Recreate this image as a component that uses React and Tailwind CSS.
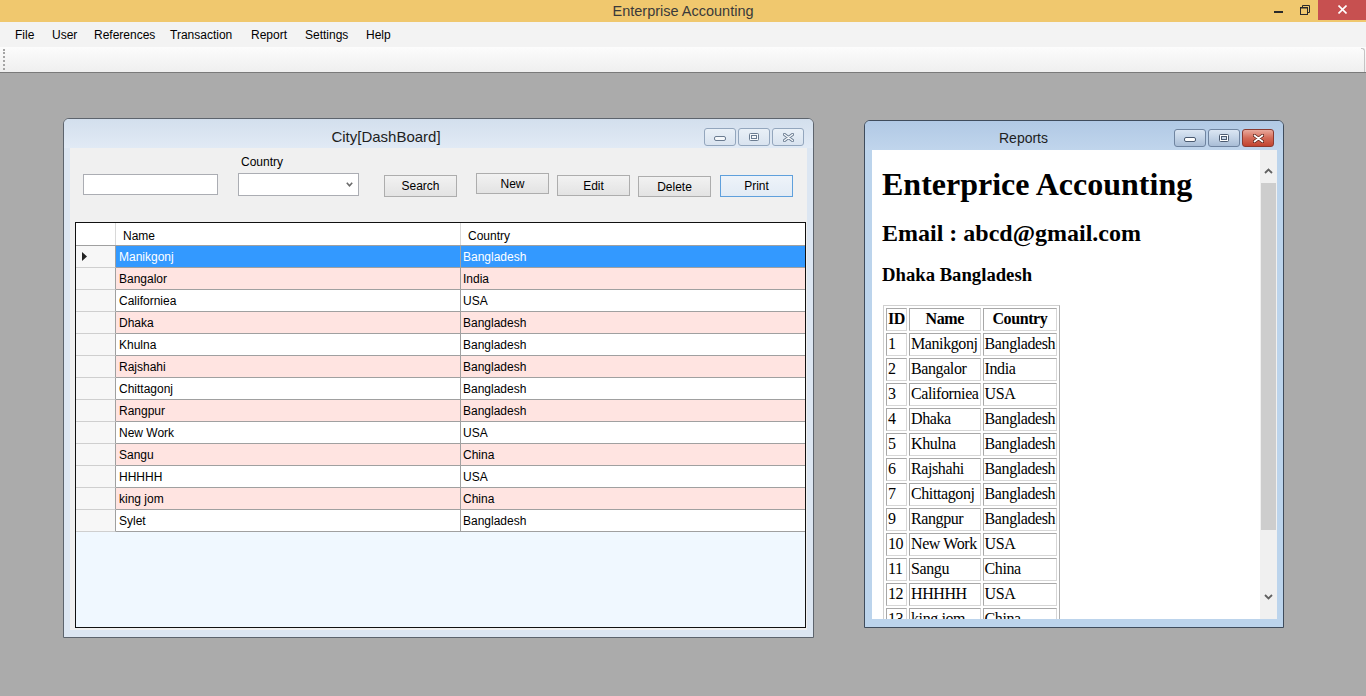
import React from "react";

const rows = [
  ["Manikgonj", "Bangladesh"],
  ["Bangalor", "India"],
  ["Californiea", "USA"],
  ["Dhaka", "Bangladesh"],
  ["Khulna", "Bangladesh"],
  ["Rajshahi", "Bangladesh"],
  ["Chittagonj", "Bangladesh"],
  ["Rangpur", "Bangladesh"],
  ["New Work", "USA"],
  ["Sangu", "China"],
  ["HHHHH", "USA"],
  ["king jom", "China"],
  ["Sylet", "Bangladesh"],
];

const report = [
  ["1", "Manikgonj", "Bangladesh"],
  ["2", "Bangalor", "India"],
  ["3", "Californiea", "USA"],
  ["4", "Dhaka", "Bangladesh"],
  ["5", "Khulna", "Bangladesh"],
  ["6", "Rajshahi", "Bangladesh"],
  ["7", "Chittagonj", "Bangladesh"],
  ["9", "Rangpur", "Bangladesh"],
  ["10", "New Work", "USA"],
  ["11", "Sangu", "China"],
  ["12", "HHHHH", "USA"],
  ["13", "king jom", "China"],
];

function InactiveBtns() {
  const b =
    "w-[32px] h-[18px] rounded-[3px] border border-[#93a6bd] bg-linear-to-b from-[#e9f0f7] to-[#d9e3ef] flex items-center justify-center";
  return (
    <div className="flex gap-[2px] mt-[9px] mr-[9px]">
      <div className={b + " pt-[3px]"}>
        <svg width="12" height="5">
          <rect x="0.5" y="0.5" width="11" height="4" rx="1.5" fill="#f5f8fb" stroke="#6b7c91" />
        </svg>
      </div>
      <div className={b}>
        <svg width="10" height="8">
          <rect x="0.5" y="0.5" width="9" height="7" rx="1" fill="#f5f8fb" stroke="#6b7c91" />
          <rect x="2.5" y="2.5" width="5" height="3" fill="none" stroke="#6b7c91" />
        </svg>
      </div>
      <div className={b}>
        <svg width="11" height="9">
          <path d="M1.5 1.5 L9.5 7.5 M9.5 1.5 L1.5 7.5" stroke="#6b7c91" strokeWidth="3.2" strokeLinecap="round" />
          <path d="M1.5 1.5 L9.5 7.5 M9.5 1.5 L1.5 7.5" stroke="#f5f8fb" strokeWidth="1.4" strokeLinecap="round" />
        </svg>
      </div>
    </div>
  );
}

function ActiveBtns() {
  const b =
    "w-[32px] h-[18px] rounded-[3px] border border-[#6f84a0] bg-linear-to-b from-[#dbe6f3] via-[#c3d3e6] to-[#a9bdd6] flex items-center justify-center";
  return (
    <div className="flex gap-[2px] mt-[8px] mr-[9px]">
      <div className={b + " pt-[3px]"}>
        <svg width="12" height="5">
          <rect x="0.5" y="0.5" width="11" height="4" rx="1.5" fill="#ffffff" stroke="#4a5a70" />
        </svg>
      </div>
      <div className={b}>
        <svg width="10" height="8">
          <rect x="0.5" y="0.5" width="9" height="7" rx="1" fill="#ffffff" stroke="#4a5a70" />
          <rect x="2.5" y="2.5" width="5" height="3" fill="#c7d5e6" stroke="#4a5a70" />
        </svg>
      </div>
      <div className="w-[32px] h-[18px] rounded-[3px] border border-[#8b3a30] bg-linear-to-b from-[#e9a99c] via-[#d36a57] to-[#c2432f] flex items-center justify-center">
        <svg width="11" height="9">
          <path d="M1.5 1.5 L9.5 7.5 M9.5 1.5 L1.5 7.5" stroke="#5a2219" strokeWidth="3.4" strokeLinecap="round" />
          <path d="M1.5 1.5 L9.5 7.5 M9.5 1.5 L1.5 7.5" stroke="#ffffff" strokeWidth="1.7" strokeLinecap="round" />
        </svg>
      </div>
    </div>
  );
}

const btn =
  "w-[73px] border border-[#adadad] bg-linear-to-b from-[#f2f2f2] to-[#e3e3e3] flex items-center justify-center text-[12px] text-black";

function CityWindow() {
  return (
    <div className="absolute left-[63px] top-[45px] w-[751px] h-[520px] border border-[#5d646d] rounded-t-[6px] bg-[#dce6f2] flex flex-col overflow-hidden">
      <div className="h-[29px] shrink-0 flex items-start bg-linear-to-b from-[#d3dfed] to-[#e1eaf5]">
        <div className="flex-1 text-center pt-[8px] pl-[4px] leading-[20px] text-[15px] text-[#1e1e1e]">City[DashBoard]</div>
        <InactiveBtns />
      </div>
      <div className="ml-[6px] w-[737px] h-[482px] shrink-0 bg-[#f0f0f0] flex flex-col">
        <div className="h-[74px] shrink-0 flex items-start">
          <div className="ml-[13px] mt-[26px] w-[135px] h-[21px] bg-white border border-[#abadb3]" />
          <div className="ml-[20px] mt-[7px] flex flex-col">
            <div className="h-[15px] leading-[15px] pl-[3px] text-[12px]">Country</div>
            <div className="mt-[3px] w-[121px] h-[23px] bg-white border border-[#abadb3] flex items-center justify-end pr-[5px]">
              <svg width="7" height="5">
                <path d="M0.8 0.8 L3.5 3.8 L6.2 0.8" fill="none" stroke="#6a6a6a" strokeWidth="1.6" />
              </svg>
            </div>
          </div>
          <div className={btn + " ml-[25px] mt-[27px] h-[22px]"}>Search</div>
          <div className={btn + " ml-[19px] mt-[25px] h-[21px]"}>New</div>
          <div className={btn + " ml-[8px] mt-[27px] h-[21px]"}>Edit</div>
          <div className={btn + " ml-[8px] mt-[28px] h-[21px]"}>Delete</div>
          <div className="ml-[9px] mt-[27px] h-[22px] w-[73px] border border-[#5fa0dc] bg-linear-to-b from-[#eef3f9] to-[#e2ebf5] flex items-center justify-center text-[12px]">
            Print
          </div>
        </div>
        <div className="ml-[5px] w-[731px] h-[406px] border border-[#111] bg-[#f0f8ff] overflow-hidden flex flex-col">
          <div className="h-[23px] shrink-0 flex bg-white border-b border-[#a0a0a0]">
            <div className="w-[40px] border-r border-[#d8d8d8]" />
            <div className="w-[345px] border-r border-[#d8d8d8] pl-[7px] pt-[2px] leading-[22px]">Name</div>
            <div className="flex-1 pl-[7px] pt-[2px] leading-[22px]">Country</div>
          </div>
          {rows.map(([n, c], i) => {
            const sel = i === 0;
            const bg = sel ? "bg-[#3399ff] text-white" : i % 2 === 1 ? "bg-[#ffe4e1]" : "bg-white";
            return (
              <div key={i} className="h-[22px] shrink-0 flex">
                <div className="w-[40px] border-r border-b border-r-[#a0a0a0] border-b-[#cfcfcf] bg-[#f7f7f7] flex items-center pl-[6px]">
                  {sel && (
                    <svg width="5" height="9">
                      <path d="M0 0 L5 4.5 L0 9 Z" fill="#222" />
                    </svg>
                  )}
                </div>
                <div className={"w-[345px] border-r border-b border-[#a0a0a0] pl-[3px] leading-[22px] " + bg}>{n}</div>
                <div className={"flex-1 border-b border-[#a0a0a0] pl-[2px] leading-[22px] " + bg}>{c}</div>
              </div>
            );
          })}
        </div>
      </div>
    </div>
  );
}

function ReportWindow() {
  const td = "border border-[#a8a8a8] border-r-[#d6d6d6] border-b-[#d6d6d6] px-[1px] h-[23px] text-left align-middle whitespace-nowrap";
  const th = "border border-[#a8a8a8] border-r-[#d6d6d6] border-b-[#d6d6d6] px-[1px] h-[23px] text-center align-middle font-bold whitespace-nowrap";
  return (
    <div className="absolute left-[864px] top-[47px] w-[420px] h-[508px] border border-[#3f4c5c] rounded-t-[6px] bg-[#bcd4ec] flex flex-col overflow-hidden">
      <div className="h-[29px] shrink-0 flex items-start bg-linear-to-b from-[#b1c9e5] to-[#c0d5ec]">
        <div className="flex-1 text-center pt-[7px] pl-[8px] leading-[20px] text-[14px] text-[#1e1e1e]">Reports</div>
        <ActiveBtns />
      </div>
      <div className="ml-[7px] w-[405px] h-[469px] shrink-0 flex">
        <div className="flex-1 bg-white overflow-hidden pl-[10px] font-['Liberation_Serif','Times_New_Roman',serif] text-black">
          <h1 className="mt-[16px] text-[32px] leading-[37px] font-bold whitespace-nowrap">Enterprice Accounting</h1>
          <h2 className="mt-[16px] text-[24px] leading-[28px] font-bold whitespace-nowrap">Email : abcd@gmail.com</h2>
          <h3 className="mt-[17px] text-[18.7px] leading-[21.5px] font-bold whitespace-nowrap">Dhaka Bangladesh</h3>
          <table className="mt-[19px] ml-[1px] border-separate border-spacing-[2px] border border-[#b0b0b0] border-t-[#d0d0d0] border-l-[#d0d0d0] text-[16px] leading-[18px] tracking-[-0.4px]">
            <thead>
              <tr>
                <th className={th}>ID</th>
                <th className={th}>Name</th>
                <th className={th}>Country</th>
              </tr>
            </thead>
            <tbody>
              {report.map(([id, n, c]) => (
                <tr key={id}>
                  <td className={td}>{id}</td>
                  <td className={td}>{n}</td>
                  <td className={td}>{c}</td>
                </tr>
              ))}
            </tbody>
          </table>
        </div>
        <div className="w-[17px] shrink-0 bg-[#f0f0f0] flex flex-col">
          <div className="h-[33px] shrink-0 flex justify-center pt-[18px]">
            <svg width="9" height="6">
              <path d="M1 5 L4.5 1.5 L8 5" fill="none" stroke="#606060" strokeWidth="1.8" />
            </svg>
          </div>
          <div className="h-[347px] shrink-0 mx-[1px] bg-[#cdcdcd]" />
          <div className="flex-1" />
          <div className="h-[33px] shrink-0 flex justify-center pt-[8px]">
            <svg width="9" height="6">
              <path d="M1 1 L4.5 4.5 L8 1" fill="none" stroke="#606060" strokeWidth="1.8" />
            </svg>
          </div>
        </div>
      </div>
    </div>
  );
}

export default function App() {
  return (
    <div className="w-[1366px] h-[696px] flex flex-col overflow-hidden font-['Liberation_Sans',Arial,sans-serif] text-[12px] text-black">
      <div className="h-[22px] shrink-0 bg-[#f0c86e] grid grid-cols-[1fr_auto_1fr]">
        <div />
        <div className="leading-[22px] text-[14.5px] text-[#3a3a3a]">Enterprise Accounting</div>
        <div className="flex justify-end items-start">
          <div className="w-[26px] h-[20px] flex justify-center pt-[11px]">
            <svg width="9" height="2">
              <rect width="9" height="2" fill="#2a2a2a" />
            </svg>
          </div>
          <div className="w-[27px] h-[20px] flex justify-center pt-[5px]">
            <svg width="10" height="10">
              <rect x="0.5" y="2.5" width="7" height="7" fill="none" stroke="#2a2a2a" />
              <path d="M2.5 2.5 V0.5 H9.5 V7.5 H7.5" fill="none" stroke="#2a2a2a" />
              <path d="M0.5 3 H7.5" stroke="#2a2a2a" strokeWidth="1" />
            </svg>
          </div>
          <div className="w-[48px] h-[20px] bg-[#c75050] flex justify-center pt-[5px]">
            <svg width="9" height="9">
              <path d="M0.5 0.5 L8.5 8.5 M8.5 0.5 L0.5 8.5" stroke="#ffffff" strokeWidth="1.6" />
            </svg>
          </div>
        </div>
      </div>
      <div className="h-[25px] shrink-0 bg-[#f3f3f3] flex items-center pl-[15px] text-[12px]">
        <div className="w-[37px]">File</div>
        <div className="w-[42px]">User</div>
        <div className="w-[76px]">References</div>
        <div className="w-[81px]">Transaction</div>
        <div className="w-[54px]">Report</div>
        <div className="w-[61px]">Settings</div>
        <div>Help</div>
      </div>
      <div className="h-[26px] shrink-0 bg-linear-to-b from-[#fcfcfc] to-[#efefef] border-b border-[#7a7a7a] flex">
        <div className="ml-[3px] mt-[2px] h-[21px] border-l-2 border-dotted border-[#a5a5a5]" />
        <div className="flex-1" />
        <div className="mr-[1px] mt-[1px] h-[24px] border-r border-t border-[#c4c4c4] rounded-tr-[3px] w-[4px]" />
      </div>
      <div className="flex-1 relative bg-[#ababab]">
        <CityWindow />
        <ReportWindow />
      </div>
    </div>
  );
}
